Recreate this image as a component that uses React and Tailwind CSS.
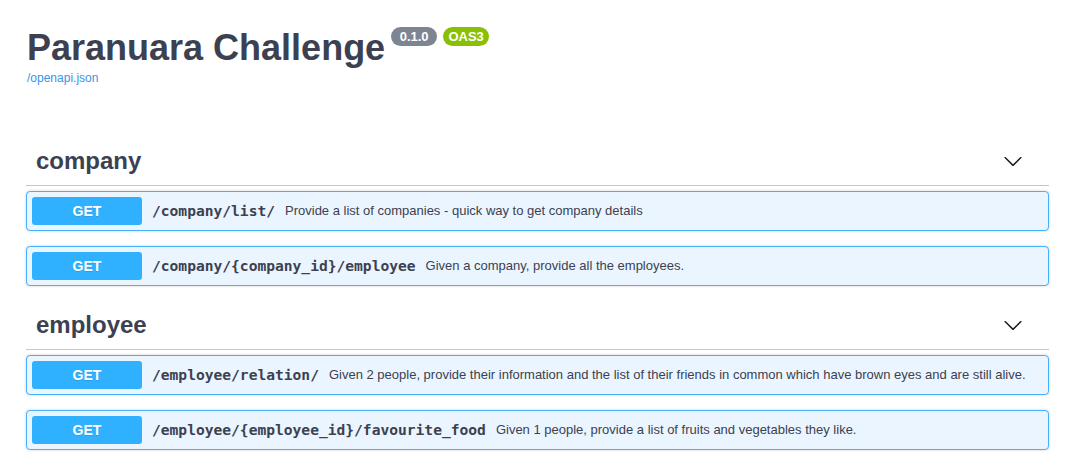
import React from "react";

const sans = { fontFamily: '"Liberation Sans", Arial, sans-serif' };
const mono = { fontFamily: '"DejaVu Sans Mono", monospace' };

function Chevron() {
  return (
    <svg width="20" height="20" viewBox="0 0 20 20" className="shrink-0">
      <path
        fill="#1a1a1a"
        d="M17.418 6.109c.272-.268.709-.268.979 0s.271.701 0 .969l-7.908 7.83c-.27.268-.707.268-.979 0l-7.908-7.83c-.27-.268-.27-.701 0-.969.271-.268.709-.268.979 0L10 13.25l7.418-7.141z"
      />
    </svg>
  );
}

function Op({ path, desc }) {
  return (
    <div className="mb-[15px] flex h-[40px] items-center rounded-[4px] border border-[#45b0fe] bg-[#ebf5ff] px-[5px] shadow-[0_0_3px_rgba(0,0,0,0.19)]">
      <div
        className="flex h-[28px] w-[110px] shrink-0 items-center justify-center rounded-[3px] bg-[#2fb1ff] text-[14px] font-bold text-white [text-shadow:0_1px_0_rgba(0,0,0,0.1)]"
        style={sans}
      >
        GET
      </div>
      <span className="px-[10px] text-[14.6px] font-bold text-[#3b4151] whitespace-nowrap" style={mono}>
        {path}
      </span>
      <span className="text-[13px] text-[#3b4151] whitespace-nowrap" style={sans}>
        {desc}
      </span>
    </div>
  );
}

function Section({ name, ops }) {
  return (
    <div className="mb-[1px]">
      <div className="mb-[5px] flex items-center border-b border-[#c4c6cb] py-[10px] pl-[10px] pr-[26px]">
        <h3 className="flex-1 text-[24px] font-bold leading-[28px] text-[#3b4151]" style={sans}>
          {name}
        </h3>
        <Chevron />
      </div>
      {ops.map((o) => (
        <Op key={o.path} path={o.path} desc={o.desc} />
      ))}
    </div>
  );
}

export default function App() {
  return (
    <div className="min-h-[470px] bg-white pl-[26px] pr-[28px] pt-[27px]" style={sans}>
      <div className="flex items-start">
        <h2 className="pl-[1px] text-[36px] font-bold leading-[41px] text-[#3b4151]" style={sans}>
          Paranuara Challenge
        </h2>
        <span className="ml-[6px] flex h-[19px] w-[46px] items-center justify-center rounded-full bg-[#7d8492] text-[13px] font-bold text-white">
          0.1.0
        </span>
        <span className="ml-[6px] flex h-[19px] w-[46px] items-center justify-center rounded-full bg-[#89bf04] text-[13px] font-bold text-white">
          OAS3
        </span>
      </div>
      <a className="mt-[3px] block pl-[1px] text-[12px] leading-[14px] text-[#3d93e6]" style={sans}>
        /openapi.json
      </a>
      <div className="mt-[52px]">
        <Section
          name="company"
          ops={[
            { path: "/company/list/", desc: "Provide a list of companies - quick way to get company details" },
            { path: "/company/{company_id}/employee", desc: "Given a company, provide all the employees." },
          ]}
        />
        <Section
          name="employee"
          ops={[
            {
              path: "/employee/relation/",
              desc: "Given 2 people, provide their information and the list of their friends in common which have brown eyes and are still alive.",
            },
            {
              path: "/employee/{employee_id}/favourite_food",
              desc: "Given 1 people, provide a list of fruits and vegetables they like.",
            },
          ]}
        />
      </div>
    </div>
  );
}
